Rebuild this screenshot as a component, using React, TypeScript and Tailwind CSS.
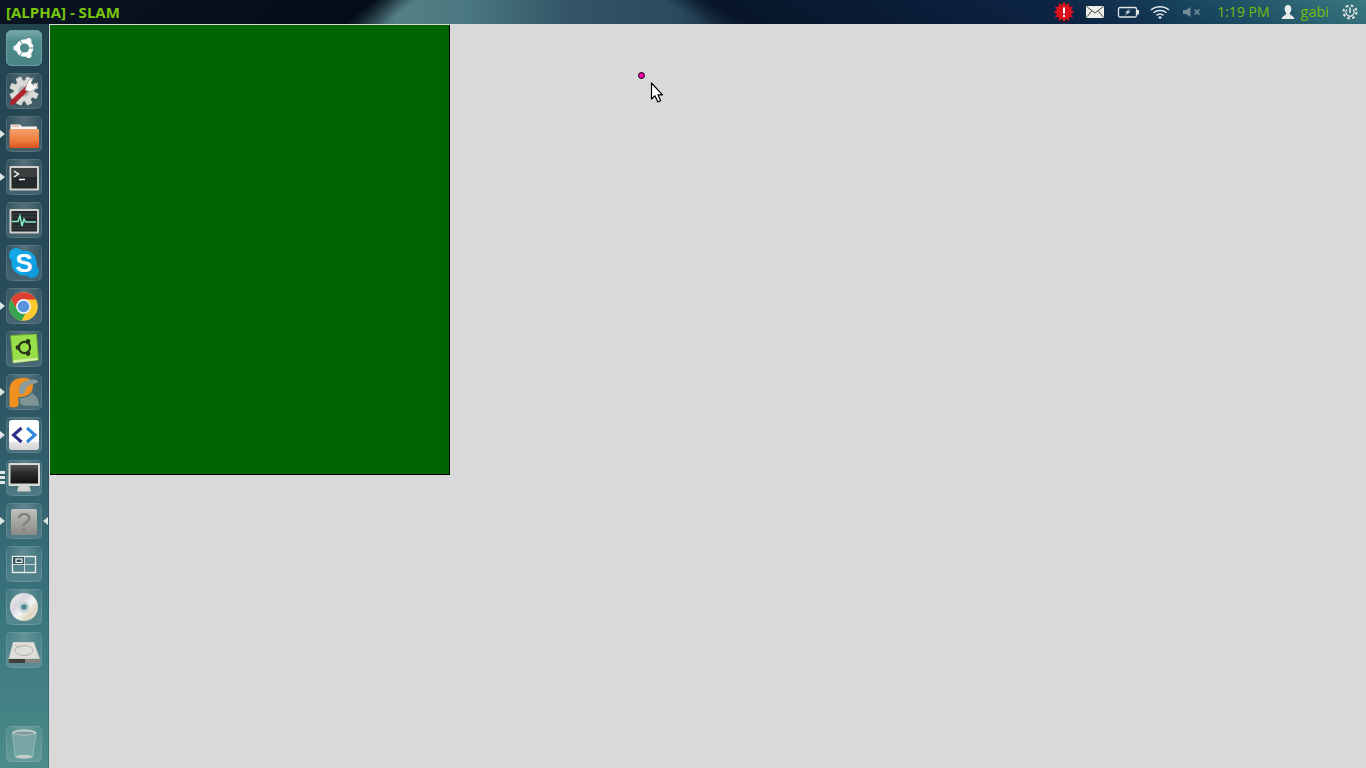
import React from "react";

const Tile = ({ active, left, right, bars, children }: { active?: boolean; left?: boolean; right?: boolean; bars?: boolean; children: React.ReactNode }) => (
  <div className="relative h-9 w-[48px] shrink-0">
    {left && <div className="absolute left-0 top-[14px] h-0 w-0 border-y-[4px] border-l-[5px] border-y-transparent border-l-[#dfe4e4]" />}
    {right && <div className="absolute left-[43px] top-[14px] h-0 w-0 border-y-[4px] border-r-[5px] border-y-transparent border-r-[#dfe4e4]" />}
    {bars && (
      <div className="absolute left-0 top-[11px] flex flex-col gap-[2px]">
        <div className="h-[3px] w-[5px] bg-[#dfe4e4]" />
        <div className="h-[3px] w-[5px] bg-[#dfe4e4]" />
        <div className="h-[3px] w-[5px] bg-[#dfe4e4]" />
      </div>
    )}
    <div
      className={
        "absolute left-[6px] top-0 h-9 w-9 rounded-[5px] border " +
        (active
          ? "border-[#6a9f9f] bg-[linear-gradient(180deg,#79a9a8,#4f8c8c_30%,#4a8586)]"
          : "border-white/10 bg-[radial-gradient(ellipse_at_50%_0%,rgba(255,255,255,0.2),rgba(255,255,255,0.05)_65%),linear-gradient(180deg,rgba(255,255,255,0.02),rgba(255,255,255,0.09))]")
      }
    />
    <svg className="absolute left-[6px] top-0" width="36" height="36" viewBox="0 0 36 36">
      {children}
    </svg>
  </div>
);

const Ubuntu = () => (
  <g>
    <circle cx="18.5" cy="18" r="8.8" fill="#fff" />
    <circle cx="18.5" cy="18" r="4.6" fill="#4f8d8d" />
    <path d="M23 18H28M16.2 14L13.7 9.7M16.2 22L13.7 26.3" stroke="#4f8d8d" strokeWidth="1" />
    <circle cx="10.2" cy="18" r="2.8" fill="#fff" />
    <circle cx="22.7" cy="10.8" r="2.8" fill="#fff" />
    <circle cx="22.7" cy="25.2" r="2.8" fill="#fff" />
  </g>
);

const Gear = () => (
  <g>
    <g fill="#dadad7">
      <circle cx="18" cy="18" r="10.5" />
      {[0, 45, 90, 135, 180, 225, 270, 315].map((a) => (
        <rect key={a} x="15" y="3.5" width="6" height="6" rx="1" transform={`rotate(${a + 22} 18 18)`} />
      ))}
    </g>
    <circle cx="18" cy="18" r="5.5" fill="#b0b5b5" />
    <path d="M6.5 29.5L21 15.5" stroke="#b0252d" strokeWidth="5" strokeLinecap="round" />
    <path d="M19 17L22 8L27.5 4.5L25 10L27.5 12.5L32 9.5L30.5 15L24 19Z" fill="#f7f7f5" stroke="#8f8f8f" strokeWidth="0.6" />
  </g>
);

const Folder = () => (
  <g>
    <defs>
      <linearGradient id="fo" x1="0" y1="0" x2="0" y2="1">
        <stop offset="0" stopColor="#f3a06c" />
        <stop offset="0.6" stopColor="#ee7d3e" />
        <stop offset="1" stopColor="#d9521c" />
      </linearGradient>
    </defs>
    <path d="M4.5 8.5H14L16 10.5H31V15H4.5Z" fill="#f4f2ee" />
    <rect x="6" y="9.5" width="7" height="1" fill="#f09a60" />
    <rect x="3.5" y="13" width="29.5" height="19" rx="1" fill="url(#fo)" />
  </g>
);

const Frame = ({ children }: { children: React.ReactNode }) => (
  <g>
    <rect x="3.5" y="7" width="29.5" height="24.5" rx="1" fill="#cfcfcb" />
    <rect x="5.5" y="9" width="25.5" height="20.5" fill="#23292a" />
    {children}
  </g>
);

const Terminal = () => (
  <Frame>
    <rect x="5.5" y="9" width="25.5" height="9" fill="#3c3f40" />
    <path d="M8 12L12.5 15L8 18" stroke="#fff" strokeWidth="1.4" fill="none" />
    <path d="M13 20.5H19" stroke="#fff" strokeWidth="1.5" />
  </Frame>
);

const Pulse = () => (
  <Frame>
    <path d="M5.5 12H31M5.5 15H31M5.5 24H31M5.5 27H31" stroke="#3c4445" strokeWidth="1" />
    <path d="M6 19.5H12L14 14L16 24L18 17L19.5 20H30" stroke="#86ecca" strokeWidth="1.5" fill="none" />
  </Frame>
);

const Skype = () => (
  <g>
    <circle cx="18" cy="18" r="12.5" fill="#10a5e6" />
    <circle cx="10" cy="10" r="7" fill="#12a8e8" />
    <circle cx="26" cy="26" r="7" fill="#0e9adb" />
    <text x="18" y="27" textAnchor="middle" fontFamily="'Liberation Sans', sans-serif" fontWeight="700" fontSize="26" fill="#fff">S</text>
  </g>
);

const Chrome = () => (
  <g>
    <circle cx="17.5" cy="18.5" r="14.3" fill="#fcc92f" />
    <path d="M5.1 11.4A14.3 14.3 0 0 1 29.9 11.4L17.5 11.4Z M5.1 11.4L11.3 22L17.5 11.4Z" fill="#dc3f33" />
    <path d="M5.1 11.4A14.3 14.3 0 0 0 15.5 32.7L21.6 22L11.3 22Z" fill="#36a550" />
    <circle cx="17.5" cy="18.5" r="7.4" fill="#eef2f7" />
    <circle cx="17.5" cy="18.5" r="5.8" fill="#5a93dd" />
  </g>
);

const GreenBox = () => (
  <g>
    <path d="M4.5 4.5L30.5 3L32.5 29L7 32Z" fill="#97e04a" stroke="#6aa82c" strokeWidth="0.8" />
    <path d="M7.5 29L31 27L32 29L7 32Z" fill="#d4eda8" />
    <circle cx="18.5" cy="16.5" r="5.6" fill="none" stroke="#27351a" strokeWidth="2.2" />
    <circle cx="11.8" cy="16.5" r="2.3" fill="#27351a" />
    <circle cx="22" cy="10.4" r="2.3" fill="#27351a" />
    <circle cx="22" cy="22.6" r="2.3" fill="#27351a" />
  </g>
);

const Pstorm = () => (
  <g>
    <path d="M3.5 32L3.5 16C3.5 8 9 4 16 4C22 4 27 5 27 11C27 19 22 23 14 23L12.5 23L12.5 31C12 34 4 34 3.5 32Z" fill="#f0901e" />
    <path d="M13 16C13 10 18 6.5 24 6C28 5 31 5 32.5 8C29 10 25 10 22 12C19 14 20 18 17 20C14 21 13 19 13 16Z" fill="#8a9c9c" />
    <path d="M14 24C20 24 24 22 26 19C31 22 33 27 33 32C26 31 20 33 14 30Z" fill="#7f9494" />
  </g>
);

const Code = () => (
  <g>
    <defs>
      <linearGradient id="wh" x1="0" y1="0" x2="0" y2="1">
        <stop offset="0" stopColor="#fff" />
        <stop offset="0.7" stopColor="#fff" />
        <stop offset="0.75" stopColor="#e6e6e6" />
        <stop offset="1" stopColor="#d4d4d4" />
      </linearGradient>
    </defs>
    <rect x="3" y="3" width="30" height="30" rx="3" fill="url(#wh)" />
    <path d="M15.5 11L7.5 18L15.5 25" stroke="#2e2f88" strokeWidth="3" fill="none" />
    <path d="M21 11L29 18L21 25" stroke="#2f86dc" strokeWidth="3" fill="none" />
  </g>
);

const Display = () => (
  <g>
    <defs>
      <linearGradient id="sc" x1="0" y1="0" x2="0" y2="1">
        <stop offset="0" stopColor="#555" />
        <stop offset="0.45" stopColor="#2a2a2a" />
        <stop offset="1" stopColor="#111" />
      </linearGradient>
    </defs>
    <path d="M13 25H23L25 31.5H11Z" fill="#d2d2d2" />
    <rect x="2.5" y="3" width="31.5" height="23" rx="1" fill="#d9d9d5" />
    <rect x="4.5" y="5" width="27.5" height="18.5" fill="url(#sc)" />
  </g>
);

const Help = () => (
  <g>
    <defs>
      <linearGradient id="hp" x1="0" y1="0" x2="0" y2="1">
        <stop offset="0" stopColor="#c0c0bc" />
        <stop offset="1" stopColor="#8a8a85" />
      </linearGradient>
    </defs>
    <rect x="5" y="6" width="26" height="26" rx="2" fill="url(#hp)" />
    <text x="18" y="28" textAnchor="middle" fontFamily="'Liberation Sans', sans-serif" fontSize="26" fill="#7e7e7a">?</text>
  </g>
);

const Workspaces = () => (
  <g>
    <rect x="6.5" y="10.5" width="23" height="16" fill="#5b8b90" fillOpacity="0.3" stroke="#e8ecec" strokeWidth="1.4" />
    <rect x="7" y="11" width="11.5" height="7.5" fill="#34555f" />
    <path d="M18.5 11V26M7 18.5H29" stroke="#cfd8d8" strokeWidth="1" />
    <rect x="10" y="13" width="6" height="3.5" fill="none" stroke="#fff" strokeWidth="1.1" />
  </g>
);

const Disc = () => (
  <g>
    <defs>
      <linearGradient id="dv" x1="0" y1="0" x2="1" y2="1">
        <stop offset="0" stopColor="#f2f2f2" />
        <stop offset="0.35" stopColor="#d8d6de" />
        <stop offset="0.55" stopColor="#f4f4f4" />
        <stop offset="0.75" stopColor="#dcd6c0" />
        <stop offset="1" stopColor="#ececec" />
      </linearGradient>
    </defs>
    <circle cx="18" cy="18" r="14" fill="url(#dv)" />
    <circle cx="18" cy="18" r="5.5" fill="#c6d3d4" />
    <circle cx="18" cy="18" r="2.8" fill="#4b8a90" />
  </g>
);

const Disk = () => (
  <g>
    <path d="M7 10H28L34 27V31H2.5V27Z" fill="#cfcfca" />
    <path d="M7.5 11H27.5L32 26H4Z" fill="#dfe0db" />
    <ellipse cx="18" cy="18.5" rx="9" ry="5" fill="none" stroke="#b2b2ad" strokeWidth="1" />
    <path d="M9 13L14 16" stroke="#b2b2ad" strokeWidth="1" />
    <rect x="2.5" y="27" width="31.5" height="4" fill="#3f3f3b" />
    <rect x="19" y="27" width="15" height="4" fill="#85857f" />
  </g>
);

const Trash = () => (
  <g>
    <path d="M6.5 7.5L9.5 31C12 33 24 33 26.5 31L30 7.5Z" fill="#8fb4b4" fillOpacity="0.45" stroke="#a9c4c4" strokeWidth="0.7" />
    <ellipse cx="18.2" cy="6.5" rx="12" ry="3" fill="#c8d4d3" />
    <ellipse cx="18.2" cy="7" rx="10" ry="1.8" fill="#7f9f9f" />
    <ellipse cx="18" cy="30.5" rx="8" ry="1.8" fill="#c0cccc" />
  </g>
);

const TopIcon = ({ children, w = 32 }: { children: React.ReactNode; w?: number }) => (
  <svg width={w} height="24" viewBox={`0 0 ${w} 24`} className="shrink-0">
    {children}
  </svg>
);

const burst = (() => {
  const pts: string[] = [];
  for (let i = 0; i < 24; i++) {
    const r = i % 2 === 0 ? 10.5 : 7.3;
    const a = (i * Math.PI) / 12;
    pts.push(`${(16 + r * Math.sin(a)).toFixed(2)},${(12 - r * Math.cos(a)).toFixed(2)}`);
  }
  return pts.join(" ");
})();

export default function App() {
  return (
    <div className="flex h-screen w-full flex-col overflow-hidden bg-[#d9d9d9] font-['Open_Sans',sans-serif]">
      <header className="flex h-6 shrink-0 items-center justify-between bg-[linear-gradient(141deg,#0a1422_0,#040c18_235px,transparent_262px),linear-gradient(31deg,transparent_362px,#081528_385px,#0c2444_560px,#1a4a62_640px,#3a7a80_724px),linear-gradient(90deg,#0a1a28_300px,#558085_395px,#4a7880_470px,#335566_570px,#2a4a5e_680px,#1c3245_720px)] pr-2 pl-[6px]">
        <span className="text-[15px] leading-6 font-bold text-[#79c70f]">[ALPHA] - SLAM</span>
        <div className="flex items-center">
          <TopIcon>
            <polygon points={burst} fill="#d8121c" />
            <rect x="15" y="7.5" width="2" height="6" fill="#fff" />
            <rect x="15" y="15" width="2" height="2" fill="#fff" />
          </TopIcon>
          <TopIcon>
            <rect x="6" y="6" width="18" height="12" rx="1" fill="#efefeb" />
            <path d="M6.5 6.5L15 13L23.5 6.5M6.5 17.5L12 10.5M23.5 17.5L18 10.5" stroke="#4a4a4a" strokeWidth="1" fill="none" />
          </TopIcon>
          <TopIcon>
            <rect x="6.5" y="7.5" width="18" height="9.5" rx="1.5" fill="none" stroke="#dfe3e3" strokeWidth="1.3" />
            <rect x="25" y="10" width="2" height="4.5" fill="#dfe3e3" />
            <path d="M18.5 8.5L13 12.5H15.5L12 16L19 11.5H16Z" fill="#dfe3e3" />
          </TopIcon>
          <TopIcon>
            <path d="M7 10C11.5 5.5 20.5 5.5 25 10M9.5 12.8C13 9.8 19 9.8 22.5 12.8M12.5 15.4C14.5 13.8 17.5 13.8 19.5 15.4" stroke="#e2e6e6" strokeWidth="1.5" fill="none" />
            <circle cx="16" cy="17.6" r="1.4" fill="#e2e6e6" />
          </TopIcon>
          <TopIcon>
            <path d="M7 10H10L14.5 7V17L10 14H7Z" fill="#728d97" />
            <path d="M18.5 9.5L23.5 14.5M23.5 9.5L18.5 14.5" stroke="#728d97" strokeWidth="1.7" />
          </TopIcon>
          <span className="ml-[9px] text-[14px] leading-6 text-[#73bd0e]">1:19 PM</span>
          <TopIcon w={26}>
            <path d="M8 4C5.6 4 4.5 6 4.7 8.2C4.9 10.2 5.8 11.7 6.4 12.4C6.4 13.8 2.2 14.7 1.5 18H14.5C13.8 14.7 9.6 13.8 9.6 12.4C10.2 11.7 11.1 10.2 11.3 8.2C11.5 6 10.4 4 8 4Z" fill="#e8ecec" transform="translate(10 1)" />
          </TopIcon>
          <span className="ml-[5px] text-[14.5px] leading-6 text-[#73bd0e]">gabi</span>
          <TopIcon w={29}>
            <g transform="translate(21 12)" fill="none" stroke="#e2e6e6">
              <circle r="6.5" strokeWidth="2" strokeDasharray="2.6 2.5" />
              <path d="M0 -4.5V1" strokeWidth="1.6" />
              <path d="M-3 -2.5A4 4 0 1 0 3 -2.5" strokeWidth="1.2" />
            </g>
          </TopIcon>
        </div>
      </header>
      <div className="flex min-h-0 flex-1">
        <aside className="flex w-[49px] shrink-0 flex-col gap-[7px] border-r border-black/15 bg-[linear-gradient(180deg,#23434f,#2a4f5d_45%,#37707a_75%,#4b8c8a)] py-[6px]">
          <Tile active><Ubuntu /></Tile>
          <Tile><Gear /></Tile>
          <Tile left><Folder /></Tile>
          <Tile left><Terminal /></Tile>
          <Tile><Pulse /></Tile>
          <Tile><Skype /></Tile>
          <Tile left><Chrome /></Tile>
          <Tile><GreenBox /></Tile>
          <Tile left><Pstorm /></Tile>
          <Tile left><Code /></Tile>
          <Tile bars><Display /></Tile>
          <Tile left right><Help /></Tile>
          <Tile><Workspaces /></Tile>
          <Tile><Disc /></Tile>
          <Tile><Disk /></Tile>
          <div className="mt-auto"><Tile><Trash /></Tile></div>
        </aside>
        <main className="relative flex-1 pt-px pl-px">
          <div className="h-[450px] w-[400px] border-r border-b border-black bg-[#006400]" />
          <div className="absolute left-[589px] top-[48px] h-[7px] w-[7px] rounded-full border border-black bg-[#ff00aa]" />
          <svg className="absolute left-[601px] top-[58px]" width="14" height="22" viewBox="0 0 14 22">
            <path d="M1.5 1V17L5 13.8L7.8 20L10.6 18.8L8 12.8H12.5Z" fill="#fff" stroke="#000" strokeWidth="1.2" strokeLinejoin="round" />
          </svg>
        </main>
      </div>
    </div>
  );
}
